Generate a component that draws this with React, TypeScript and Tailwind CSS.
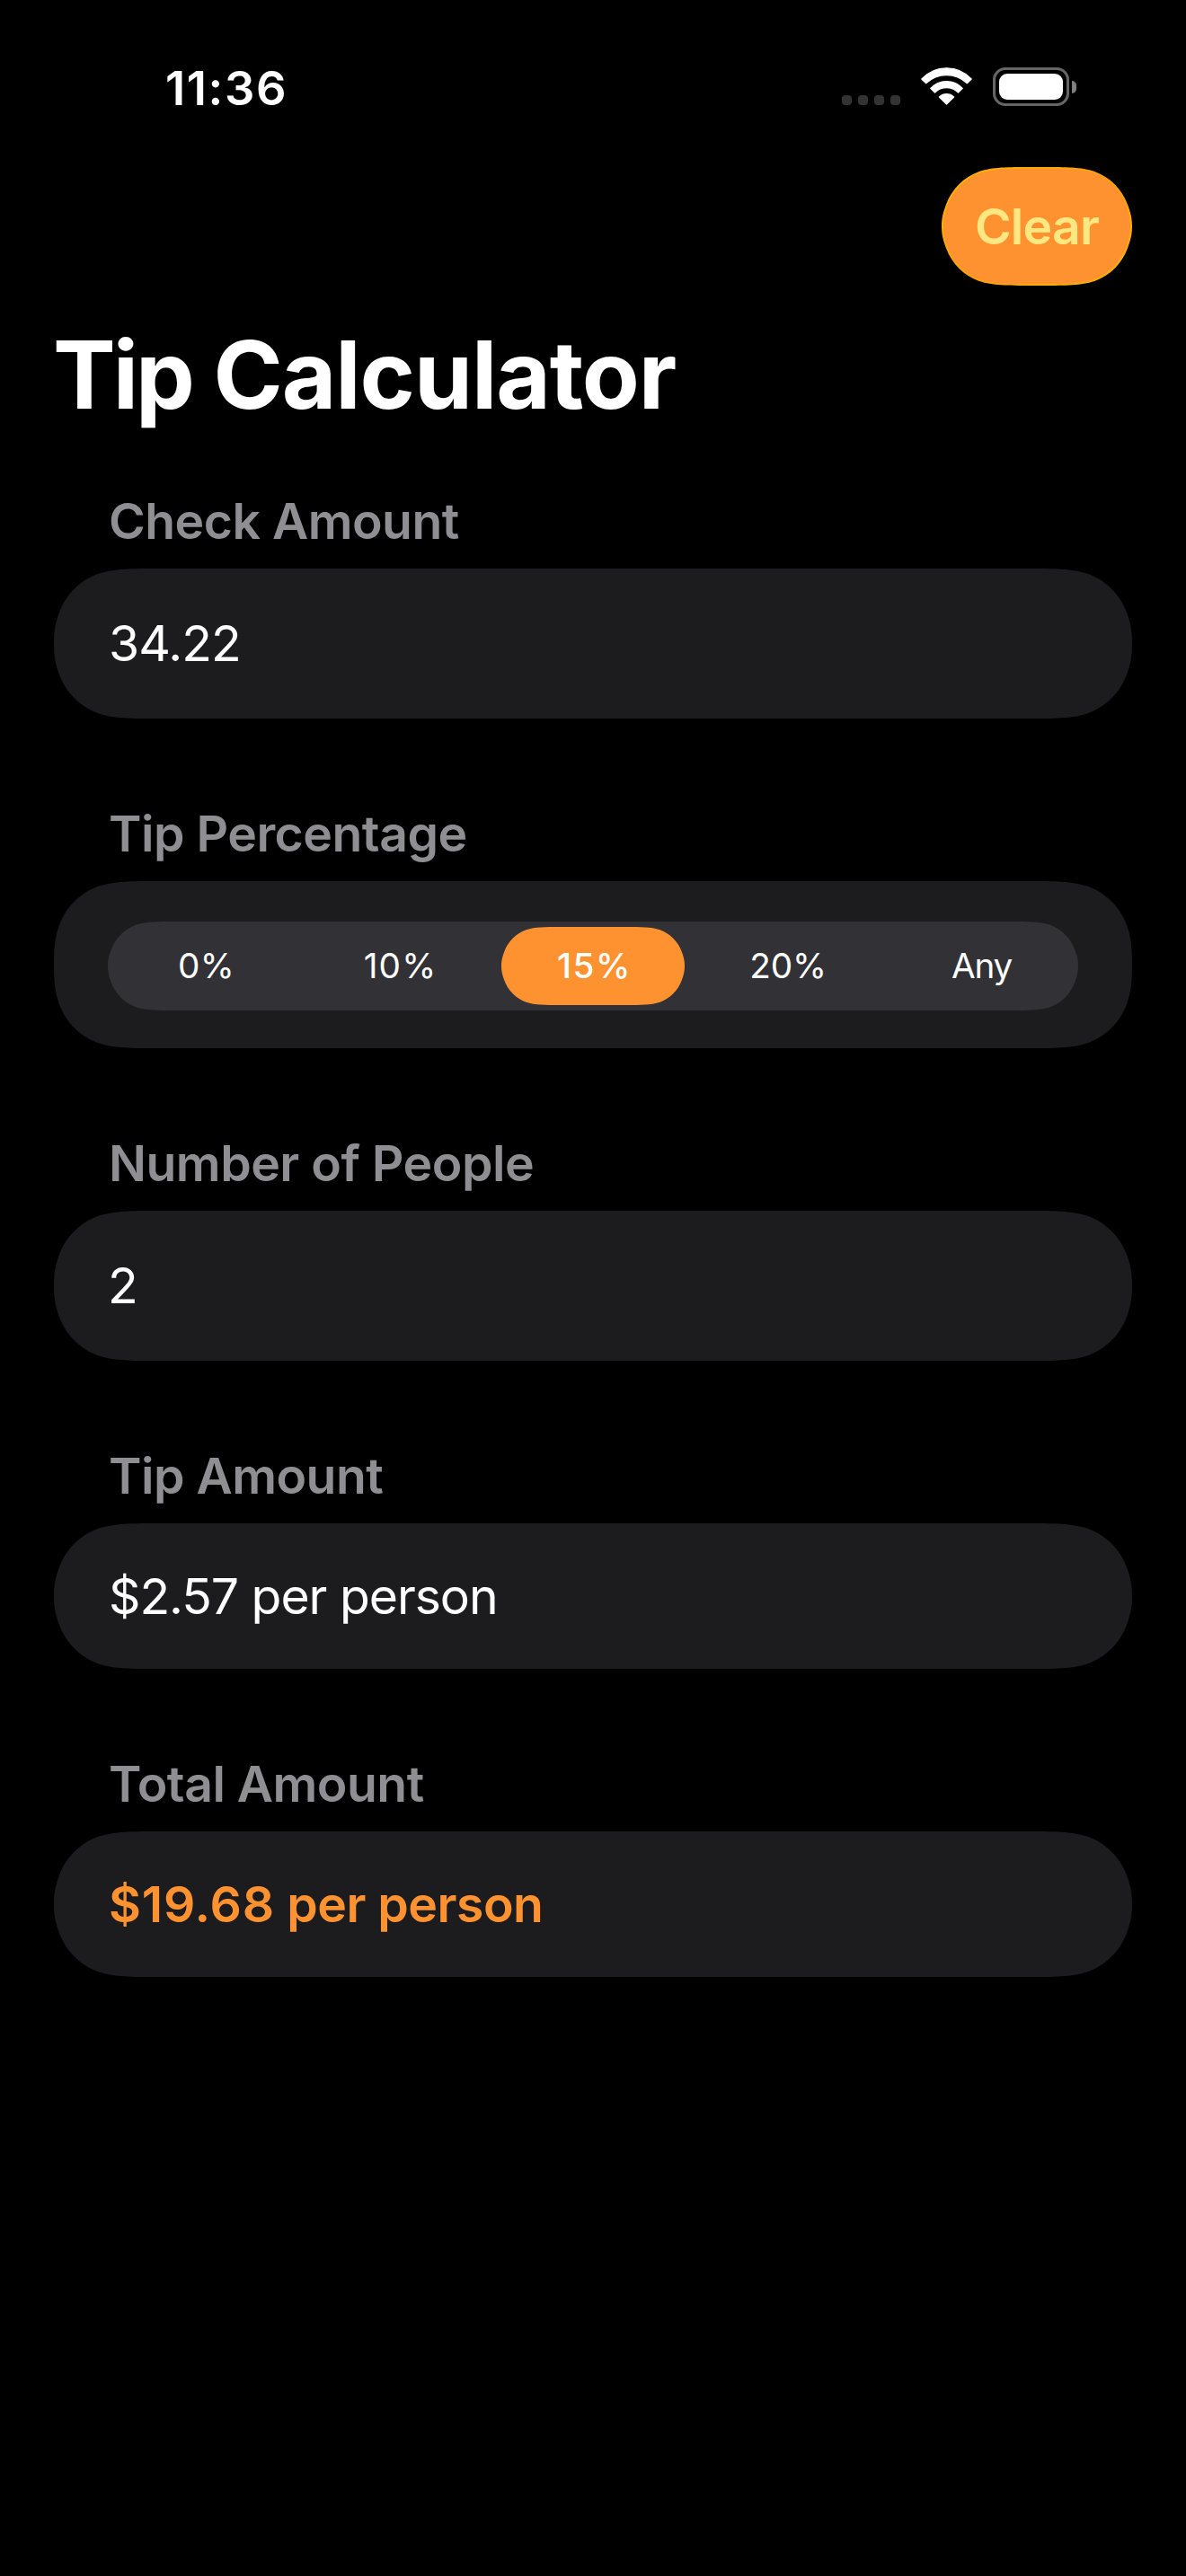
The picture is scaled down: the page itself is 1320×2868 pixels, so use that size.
import type { ReactNode } from "react";

type ShapeProps = {
  w: number;
  h: number;
  r: number;
  className: string;
  children?: ReactNode;
};

/** Path of a rectangle with continuous-curvature corners. */
function continuousCorners(w: number, h: number, r: number): string {
  const ex = Math.min(1.5287 * r, w / 2);
  const ey = Math.min(1.5287 * r, h / 2);
  const f = Math.min(1, Math.max(0, (ey / r - 1) / 0.5287));
  // Control points run from the top edge down to the left edge.
  const corner: [number, number][] = [
    [ex, 0],
    [1.0885 * r, 0],
    [0.8684 * r, 0],
    [0.6315 * r, 0.0749 * r],
    [0.3728 * r, 0.1691 * r],
    [0.1691 * r, 0.3728 * r],
    [0.0749 * r, 0.6315 * r],
    [0.02 * (1 - f) * r, (0.78 + 0.088 * f) * r],
    [0, (0.87 + 0.218 * f) * r],
    [0, ey],
  ];
  const back = [...corner].reverse();
  const side = (pts: [number, number][], fx: boolean, fy: boolean) => {
    const p = pts.map(
      ([x, y]) => `${(fx ? w - x : x).toFixed(2)} ${(fy ? h - y : y).toFixed(2)}`,
    );
    return `L${p[0]}C${p[1]} ${p[2]} ${p[3]}C${p[4]} ${p[5]} ${p[6]}C${p[7]} ${p[8]} ${p[9]}`;
  };
  return (
    `M${w - ex} 0` +
    side(corner, true, false) +
    side(back, true, true) +
    side(corner, false, true) +
    side(back, false, false) +
    "Z"
  );
}

function Shape({ w, h, r, className, children }: ShapeProps) {
  return (
    <div className={className} style={{ clipPath: `path("${continuousCorners(w, h, r)}")` }}>
      {children}
    </div>
  );
}

function StatusBar() {
  return (
    <div className="flex h-[186px] items-start justify-between pr-[122px] pl-[184px]">
      <div className="mt-[66px] h-16 text-[52.5px] leading-16 font-semibold tracking-[1.6px] whitespace-nowrap">
        11:36
      </div>
      <div className="mt-[75px] flex h-[43px] items-start">
        <div className="mt-[31px] mr-[23px] flex gap-[7px]">
          <i className="size-[11px] rounded-[4px] bg-[#333333]" />
          <i className="size-[11px] rounded-[4px] bg-[#333333]" />
          <i className="size-[11px] rounded-[4px] bg-[#333333]" />
          <i className="size-[11px] rounded-[4px] bg-[#333333]" />
        </div>
        <svg
          className="mr-[23px] h-[42px] w-[57px]"
          viewBox="0 0 57 42"
          fill="white"
          stroke="white"
          strokeWidth="1.2"
          strokeLinejoin="round"
        >
          <path d="M0.8 13 A37.5 37.5 0 0 1 56.2 13 L51.3 17.7 A33 33 0 0 0 5.7 17.7 Z" />
          <path d="M10.7 23.3 A24.2 24.2 0 0 1 46.3 23.3 L41.5 28 A18.6 18.6 0 0 0 15.5 28 Z" />
          <path d="M20.4 33 A11.6 11.6 0 0 1 36.6 33 L28.5 41.2 Z" />
        </svg>
        <div className="flex h-[43px] w-[85px] items-center justify-center rounded-[14px] border-3 border-[#666666]">
          <div className="h-[29px] w-[71px] shrink-0 rounded-[9px] bg-white" />
        </div>
        <div className="mt-[15px] ml-[3px] h-[14px] w-[5px] rounded-r-full bg-[#7f7f7f]" />
      </div>
    </div>
  );
}

function Label({ children }: { children: ReactNode }) {
  return (
    <h2 className="mb-[19px] h-[68px] pl-[61px] text-[55.3px] leading-[68px] font-semibold tracking-[-0.5px] whitespace-nowrap text-[#8e8e93]">
      {children}
    </h2>
  );
}

function Section({ label, children }: { label: string; children: ReactNode }) {
  return (
    <section>
      <Label>{label}</Label>
      {children}
    </section>
  );
}

const tips = [
  { label: "0%", text: "pl-[3px] tracking-[0.4px]" },
  { label: "10%", text: "pl-[3px] tracking-[1.2px]" },
  { label: "15%", text: "pl-[3px] tracking-[1.5px]" },
  { label: "20%", text: "pl-[2px] tracking-[-0.1px]" },
  { label: "Any", text: "pl-px tracking-[-1.3px]" },
];

export default function App() {
  return (
    <main className="h-[2868px] w-[1320px] overflow-hidden bg-black font-['Inter',sans-serif] text-white">
      <StatusBar />

      <div className="flex justify-end px-15">
        <Shape
          w={212}
          h={132}
          r={66}
          className="h-[132px] w-[212px] bg-linear-to-br from-[#ffb700] via-[#ff9f0c] to-[#ffb700] p-0.5"
        >
          <Shape
            w={208}
            h={128}
            r={64}
            className="flex h-32 w-[208px] items-center justify-center bg-[#ff9230] pb-px text-[55.3px] leading-none font-semibold tracking-[-0.8px] text-[#ffe882]"
          >
            Clear
          </Shape>
        </Shape>
      </div>

      <h1 className="mt-[39px] h-[120px] pl-[59px] text-[104.5px] leading-[120px] font-bold tracking-[-1.1px] whitespace-nowrap">
        <span className="tracking-[-3px]">Tip</span> Calculator
      </h1>

      <div className="mt-[69px] flex flex-col gap-[94px] px-15">
        <Section label="Check Amount">
          <Shape w={1200} h={167} r={78} className="flex h-[167px] items-center bg-[#1c1c1e] px-[61px] pb-px">
            <span className="text-[55.3px] leading-[68px] tracking-[-0.92px]">34.22</span>
          </Shape>
        </Section>

        <Section label="Tip Percentage">
          <Shape w={1200} h={186} r={78} className="h-[186px] bg-[#1c1c1e] px-15 pt-[45px]">
            <Shape w={1080} h={99} r={49.5} className="grid h-[99px] grid-cols-5 bg-[#323136]">
              {tips.map((tip) =>
                tip.label === "15%" ? (
                  <div key={tip.label} className="p-1.5">
                    <Shape
                      w={204}
                      h={87}
                      r={43.5}
                      className="flex h-[87px] items-center justify-center bg-[#ff9230] pb-px text-[38.7px] leading-12 font-medium"
                    >
                      <span className={tip.text}>{tip.label}</span>
                    </Shape>
                  </div>
                ) : (
                  <div
                    key={tip.label}
                    className="flex items-center justify-center pb-px text-[38.7px] leading-12"
                  >
                    <span className={tip.text}>{tip.label}</span>
                  </div>
                ),
              )}
            </Shape>
          </Shape>
        </Section>

        <Section label="Number of People">
          <Shape w={1200} h={167} r={78} className="flex h-[167px] items-center bg-[#1c1c1e] px-15 pb-px">
            <span className="text-[55.3px] leading-[68px]">2</span>
          </Shape>
        </Section>

        <Section label="Tip Amount">
          <Shape w={1200} h={162} r={78} className="flex h-[162px] items-center bg-[#1c1c1e] px-[61px]">
            <span className="text-[55.3px] leading-[68px] tracking-[-1.04px]">$2.57 per person</span>
          </Shape>
        </Section>

        <Section label="Total Amount">
          <Shape w={1200} h={162} r={78} className="flex h-[162px] items-center bg-[#1c1c1e] px-[61px]">
            <span className="text-[55.3px] leading-[68px] font-semibold tracking-[-0.5px] whitespace-pre text-[#ff9230]">
              <span className="tracking-[0.8px]">$19.68</span> per person
            </span>
          </Shape>
        </Section>
      </div>
    </main>
  );
}
